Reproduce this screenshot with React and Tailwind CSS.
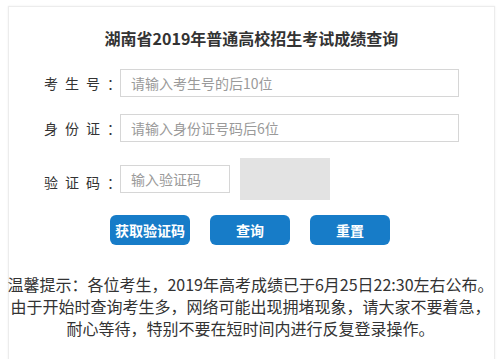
import React, { useState } from "react";

const font = { fontFamily: '"Noto Sans CJK SC", "Noto Sans", sans-serif' };

const Label = ({ chars, className = "" }) => (
  <div className={`flex w-[76px] shrink-0 gap-[7px] text-[14px] text-[#333] ${className}`}>
    {chars.map((c, i) => (
      <span key={i} className="w-[14px]">{c}</span>
    ))}
  </div>
);

const Field = ({ value, onChange, placeholder, className = "w-[339px]" }) => (
  <input
    value={value}
    onChange={(e) => onChange(e.target.value)}
    placeholder={placeholder}
    className={`h-[28px] border border-[#d6d6d6] pl-[10px] text-[14px] text-[#333] outline-none placeholder:text-[#9a9a9a] ${className}`}
  />
);

const App = () => {
  const [examNo, setExamNo] = useState("");
  const [idNo, setIdNo] = useState("");
  const [code, setCode] = useState("");

  return (
    <div className="h-[359px] w-[501px] overflow-hidden bg-white pt-[6px]" style={font}>
      <div className="ml-[8px] min-h-[360px] w-[487px] border border-[#ececec] shadow-[0_0_2px_#eeeeee]">
        <h1 className="pt-[19px] text-center text-[16px] font-bold leading-[24px] text-[#333]">
          湖南省2019年普通高校招生考试成绩查询
        </h1>

        <div className="mt-[19px] flex flex-col pl-[35px]">
          <div className="flex items-center">
            <Label chars={["考", "生", "号", "："]} />
            <Field value={examNo} onChange={setExamNo} placeholder="请输入考生号的后10位" />
          </div>

          <div className="mt-[17px] flex items-center">
            <Label chars={["身", "份", "证", "："]} />
            <Field value={idNo} onChange={setIdNo} placeholder="请输入身份证号码后6位" />
          </div>

          <div className="mt-[16px] flex items-center">
            <Label chars={["验", "证", "码", "："]} className="mt-[7px]" />
            <Field value={code} onChange={setCode} placeholder="输入验证码" className="w-[110px]" />
            <div className="ml-[10px] h-[42px] w-[90px] bg-[#e3e3e3]" />
          </div>
        </div>

        <div className="mt-[15px] flex justify-center gap-[20px] pr-[3px]">
          <button className="h-[30px] w-[80px] rounded-[6px] bg-[#177cc8] text-[14px] font-bold text-white">
            获取验证码
          </button>
          <button className="h-[30px] w-[80px] rounded-[6px] bg-[#177cc8] text-[14px] font-bold text-white">
            查询
          </button>
          <button className="h-[30px] w-[80px] rounded-[6px] bg-[#177cc8] text-[14px] font-bold text-white">
            重置
          </button>
        </div>

        <div className="-ml-[9px] mt-[28px] flex w-[501px] flex-col items-center text-[16px] leading-[22px] text-[#333]">
          <p className="whitespace-nowrap">温馨提示：各位考生，2019年高考成绩已于6月25日22:30左右公布。</p>
          <p className="whitespace-nowrap">由于开始时查询考生多，网络可能出现拥堵现象，请大家不要着急，</p>
          <p className="whitespace-nowrap">耐心等待，特别不要在短时间内进行反复登录操作。</p>
        </div>
      </div>
    </div>
  );
};

export default App;
